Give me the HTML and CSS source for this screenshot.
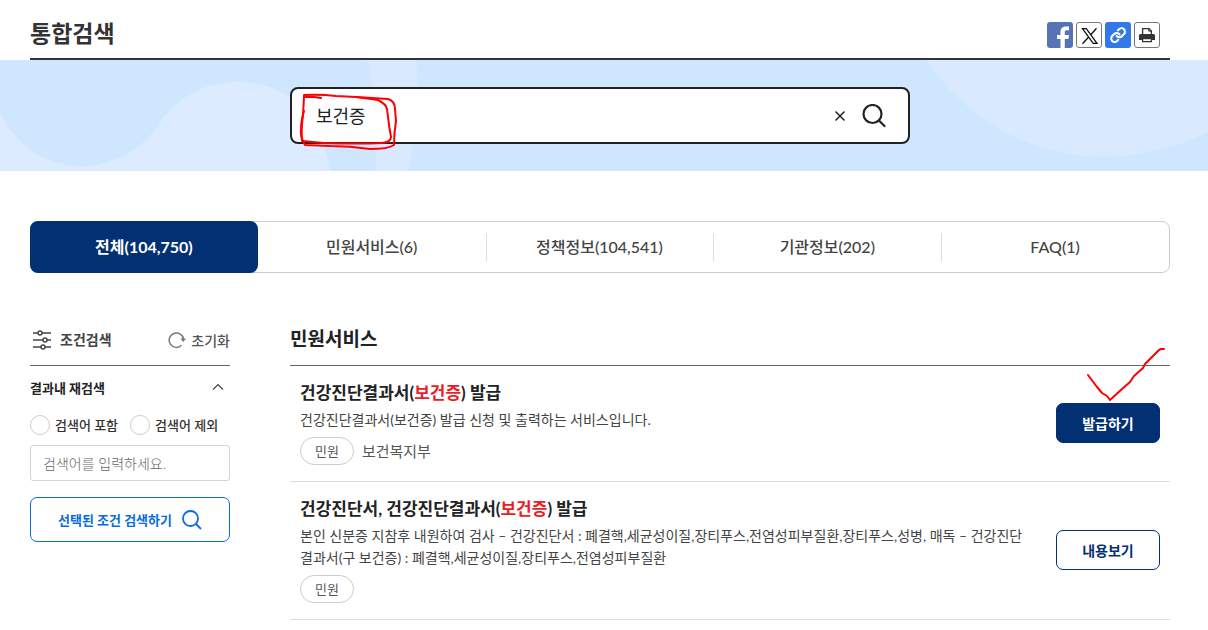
FILE: index.html
```html
<!DOCTYPE html>
<html lang="ko">
<head>
  <meta charset="UTF-8">
  <meta name="viewport" content="width=device-width, initial-scale=1.0">
  <title>통합검색</title>
  <link rel="stylesheet" href="styles.css">
</head>
<body>

  <header class="container">
    <div class="page-head">
      <h1>통합검색</h1>
      <div class="share">
        <a href="#" class="share-btn facebook" aria-label="페이스북">
          <svg viewBox="0 0 26 26"><path fill="#fff" d="M13.500 26v-9H10v-4h3.500V10.500C13.500 6.500 15.500 4.500 19 4.500h3v3.800h-2.200c-1.600 0-2 .8-2 2.200V13H22l-.5 4h-3.700v9z"/></svg>
        </a>
        <a href="#" class="share-btn outline" aria-label="X">
          <svg viewBox="0 0 26 26"><path fill="none" stroke="#111" stroke-width="1.300" d="M6.500 6.600h3.800L21 21.400h-3.800zM20.500 6.300l-6.200 7M12.400 15.200L6.500 21.700"/></svg>
        </a>
        <a href="#" class="share-btn link" aria-label="링크 복사">
          <svg viewBox="0 0 24 24"><g fill="none" stroke="#fff" stroke-width="3" stroke-linecap="round" stroke-linejoin="round" transform="translate(4.400 4.400) scale(.64)"><path d="M10 13a5 5 0 0 0 7.540.54l3-3a5 5 0 0 0-7.070-7.070l-1.720 1.710"/><path d="M14 11a5 5 0 0 0-7.540-.54l-3 3a5 5 0 0 0 7.070 7.070l1.710-1.710"/></g></svg>
        </a>
        <button type="button" class="share-btn outline" aria-label="인쇄">
          <svg viewBox="0 0 26 26"><path fill="#fff" stroke="#333" stroke-width="1.300" d="M8.600 13V6.600h6.400l2.400 2.400v4"/><path fill="none" stroke="#333" d="M14.800 6.600V9.200h2.600"/><path fill="#333" d="M6.500 12h13a1.500 1.500 0 0 1 1.500 1.500V18H5v-4.500A1.500 1.500 0 0 1 6.500 12z"/><path fill="#fff" stroke="#333" stroke-width="1.300" d="M8.600 16.600h8.800v3H8.600z"/></svg>
        </button>
      </div>
    </div>
  </header>

  <section class="banner">
    <svg class="banner-bg" viewBox="0 0 1208 111" preserveAspectRatio="xMidYMid slice" aria-hidden="true">
      <path fill="#dcebff" d="M0 52C15 85 45 106 83 106C115 106 142 88 158 66C175 38 205 22 236 22C290 22 322 55 330 111H0z"/>
      <path fill="#d9eaff" d="M367 0Q382 55 375 111H408Q421 55 416 0z"/>
      <path fill="#d9eaff" d="M927 0C965 58 1030 97 1103 97C1140 97 1175 88 1208 72V0z"/>
    </svg>
    <div class="container">
      <form class="search-box">
        <input type="text" class="search-input" value="보건증" aria-label="검색어">
        <button type="button" class="icon-btn" aria-label="지우기">
          <svg width="12" height="12" viewBox="0 0 12 12"><path stroke="#222" stroke-width="1.500" d="M1.500 1.500l9 9M10.500 1.500l-9 9"/></svg>
        </button>
        <button type="submit" class="icon-btn" aria-label="검색">
          <svg width="24" height="24" viewBox="0 0 24 24"><g fill="none" stroke="#222" stroke-width="2.200" stroke-linecap="round"><circle cx="10.500" cy="10" r="9"/><path d="M17 16.500l5.500 5.500"/></g></svg>
        </button>
        <svg class="pen-box" width="108" height="66" viewBox="0 0 108 66" aria-hidden="true">
          <g fill="none" stroke="#f00" stroke-width="2" stroke-linecap="round" stroke-linejoin="round">
            <path d="M31 11L24 10L14 10L14 8Q30 7 46 9L66 10Q82 12 88 13Q96 17 97 22L99 38L101 50Q101 55 92 56Q66 57 34 56L12 54Q11 42 13 28L14 10"/>
            <path d="M66 10L98 12Q105 14 105 22L106 34Q104 46 104 58Q98 62 80 62Q60 59 40 59L15 58Q10 50 11 42Q11 34 14 24"/>
          </g>
        </svg>
      </form>
    </div>
  </section>

  <div class="container">
    <nav class="tabs">
      <a href="#" class="tab active">전체(104,750)</a>
      <a href="#" class="tab">민원서비스(6)</a>
      <a href="#" class="tab">정책정보(104,541)</a>
      <a href="#" class="tab">기관정보(202)</a>
      <a href="#" class="tab">FAQ(1)</a>
    </nav>

    <div class="content">
      <!-- 조건검색 -->
      <aside class="filter">
        <div class="filter-head">
          <h2>
            <svg width="20" height="20" viewBox="0 0 20 20"><g fill="none" stroke="#444" stroke-width="1.500"><path d="M1 3h5M10 3h9M1 10h10M15 10h4M1 17h8M13 17h6"/><circle cx="8" cy="3" r="2"/><circle cx="13" cy="10" r="2"/><circle cx="11" cy="17" r="2"/></g></svg>
            조건검색
          </h2>
          <button type="button" class="reset">
            <svg width="18" height="18" viewBox="0 0 18 18"><path fill="none" stroke="#777" stroke-width="1.500" d="M13.500 14.300A7.200 7.200 0 1 1 15.500 8"/><path fill="#777" d="M12.500 7.500h5.500l-2.700 3.500z"/></svg>
            초기화
          </button>
        </div>
        <form class="filter-form">
          <button type="button" class="fold">
            결과내 재검색
            <svg width="12" height="8" viewBox="0 0 12 8"><path fill="none" stroke="#444" stroke-width="1.200" d="M1 6.500l5-5 5 5"/></svg>
          </button>
          <div class="radios">
            <label><input type="radio" name="mode" value="include">검색어 포함</label>
            <label><input type="radio" name="mode" value="exclude">검색어 제외</label>
          </div>
          <input type="text" class="filter-input" placeholder="검색어를 입력하세요." aria-label="결과내 재검색어">
          <button type="submit" class="filter-submit">
            선택된 조건 검색하기
            <svg width="20" height="20" viewBox="0 0 20 20"><g fill="none" stroke="#0a6be0" stroke-width="1.800"><circle cx="8.500" cy="8.500" r="7.500"/><path d="M14 14l5 5"/></g></svg>
          </button>
        </form>
      </aside>

      <!-- 검색 결과 -->
      <main class="results">
        <h2>민원서비스</h2>
        <ul>
          <li class="item">
            <div class="item-text">
              <h3>건강진단결과서(<em>보건증</em>) 발급</h3>
              <p>건강진단결과서(보건증) 발급 신청 및 출력하는 서비스입니다.</p>
              <div class="meta"><span class="tag">민원</span><span>보건복지부</span></div>
            </div>
            <div class="action">
              <button type="button" class="btn primary">발급하기</button>
              <svg class="pen-check" width="80" height="54" viewBox="0 0 80 54" aria-hidden="true"><path fill="none" stroke="#f00" stroke-width="2" stroke-linecap="round" stroke-linejoin="round" d="M2 28L11 40L16 46L21 49L24 53L36 42L44 35L48 29L57 21L59 17L68 8L73 3L75 2H78"/></svg>
            </div>
          </li>
          <li class="item">
            <div class="item-text">
              <h3>건강진단서, 건강진단결과서(<em>보건증</em>) 발급</h3>
              <p>본인 신분증 지참후 내원하여 검사 – 건강진단서 : 폐결핵,세균성이질,장티푸스,전염성피부질환,장티푸스,성병, 매독 – 건강진단결과서(구 보건증) : 폐결핵,세균성이질,장티푸스,전염성피부질환</p>
              <div class="meta"><span class="tag">민원</span></div>
            </div>
            <div class="action">
              <button type="button" class="btn">내용보기</button>
            </div>
          </li>
        </ul>
      </main>
    </div>
  </div>

</body>
</html>
```
FILE: styles.css
```css
* {
  box-sizing: border-box;
}

body {
  margin: 0;
  background: #fff;
  color: #444;
  font-family: Lato, "Noto Sans CJK KR", sans-serif;
  font-size: 15px;
  line-height: 22px;
}

h1, h2, h3, p, ul {
  margin: 0;
  padding: 0;
}

button, input {
  font-family: inherit;
}

button {
  padding: 0;
  border: none;
  background: none;
  cursor: pointer;
}

svg {
  display: block;
  flex-shrink: 0;
}

.container {
  padding: 0 38px 0 30px;
}

/* 상단 */
.page-head {
  display: flex;
  justify-content: space-between;
  align-items: center;
  height: 60px;
  padding: 8px 10px 0 0;
  border-bottom: 2px solid #333338;
}

h1 {
  font-size: 23px;
  line-height: 32px;
  color: #333;
}

.share {
  display: flex;
  gap: 3px;
  padding-top: 4px;
}

.share-btn {
  width: 26px;
  height: 26px;
  border-radius: 3px;
  overflow: hidden;
}

.share-btn svg {
  width: 26px;
  height: 26px;
}

.outline {
  border: 1px solid #777;
}

.outline svg {
  margin: -1px;
}

.facebook {
  background: #5674b5;
}

.link {
  background: #3278e6;
}

/* 검색창 */
.banner {
  position: relative;
  padding: 27px 0;
  background: #cfe6ff;
}

.banner-bg {
  position: absolute;
  inset: 0;
  width: 100%;
  height: 100%;
}

.search-box {
  position: relative;
  display: flex;
  align-items: center;
  gap: 16px;
  max-width: 620px;
  height: 57px;
  margin: 0 auto;
  padding: 0 22px 0 24px;
  border: 2px solid #222;
  border-radius: 8px;
  background: #fff;
}

.search-input {
  flex: 1;
  min-width: 0;
  padding: 0;
  border: none;
  outline: none;
  background: none;
  color: #222;
  font-size: 18px;
  line-height: 26px;
}

.pen-box {
  position: absolute;
  top: -2px;
  left: -2px;
  pointer-events: none;
}

/* 탭 */
.tabs {
  display: flex;
  height: 52px;
  margin-top: 50px;
  border: 1px solid #ccc;
  border-radius: 8px;
}

.tab {
  display: flex;
  flex: 1;
  justify-content: center;
  align-items: center;
  color: #444;
  font-size: 16px;
  font-weight: 500;
  text-decoration: none;
}

.tab + .tab + .tab::before {
  content: "";
  width: 1px;
  height: 28px;
  margin-right: auto;
  background: #ddd;
}

.tab + .tab + .tab::after {
  content: "";
  width: 1px;
  margin-left: auto;
}

.active {
  margin: -1px 0 -1px -1px;
  border-radius: 8px;
  background: #032f73;
  color: #fff;
  font-weight: 700;
}

.content {
  display: flex;
  gap: 60px;
  margin-top: 50px;
}

/* 조건검색 */
.filter {
  flex: 0 0 200px;
}

.filter-head {
  display: flex;
  justify-content: space-between;
  align-items: center;
  height: 43px;
  padding-bottom: 8px;
  border-bottom: 1px solid #666;
}

.filter-head h2 {
  display: flex;
  align-items: center;
  gap: 8px;
  padding-left: 2px;
  font-size: 14px;
}

.reset {
  display: flex;
  align-items: center;
  gap: 5px;
  color: #555;
  font-size: 14px;
  font-weight: 500;
}

.filter-form {
  display: flex;
  flex-direction: column;
}

.fold {
  display: flex;
  justify-content: space-between;
  align-items: center;
  height: 44px;
  padding: 0 6px 2px 0;
  color: #222;
  font-size: 13px;
  font-weight: 700;
}

.radios {
  display: flex;
  gap: 12px;
  padding: 4px 0 9px;
}

.radios label {
  display: flex;
  align-items: center;
  gap: 5px;
  color: #333;
  font-size: 13px;
  font-weight: 500;
  white-space: nowrap;
}

.radios input {
  appearance: none;
  width: 20px;
  height: 20px;
  margin: 0;
  border: 1px solid #ccc;
  border-radius: 50%;
}

.radios input:checked {
  border: 6px solid #0a6be0;
}

.filter-input {
  width: 100%;
  height: 36px;
  padding: 0 12px;
  border: 1px solid #d5d5d5;
  border-radius: 3px;
  font-size: 14px;
  font-weight: 300;
}

.filter-input::placeholder {
  color: #666;
}

.filter-submit {
  display: flex;
  justify-content: center;
  align-items: center;
  gap: 10px;
  height: 45px;
  margin-top: 16px;
  border: 1px solid #0a6be0;
  border-radius: 7px;
  color: #0a6be0;
  font-size: 13px;
  font-weight: 700;
}

/* 검색 결과 */
.results {
  flex: 1;
  min-width: 0;
}

.results h2 {
  height: 43px;
  border-bottom: 1px solid #666;
  color: #222;
  font-size: 19px;
  line-height: 32px;
}

.results ul {
  list-style: none;
}

.item {
  display: flex;
  align-items: center;
  gap: 28px;
  padding: 15px 10px 16px;
  border-bottom: 1px solid #ddd;
}

.item-text {
  flex: 1;
  min-width: 0;
}

h3 {
  margin-bottom: 4px;
  color: #222;
  font-size: 17px;
  line-height: 24px;
}

h3 em {
  color: #ed1c24;
  font-style: normal;
}

.item p {
  margin-bottom: 6px;
  font-size: 14px;
  word-break: break-all;
}

.meta {
  display: flex;
  align-items: center;
  gap: 8px;
  color: #555;
}

.tag {
  padding: 2px 14px;
  border: 1px solid #ccc;
  border-radius: 14px;
  font-size: 13px;
  line-height: 22px;
}

.action {
  position: relative;
}

.btn {
  display: block;
  width: 104px;
  height: 40px;
  border: 1px solid #032f73;
  border-radius: 7px;
  color: #032f73;
  font-size: 14px;
  font-weight: 700;
}

.primary {
  background: #032f73;
  color: #fff;
}

.pen-check {
  position: absolute;
  right: -6px;
  bottom: 42px;
  pointer-events: none;
}
```
